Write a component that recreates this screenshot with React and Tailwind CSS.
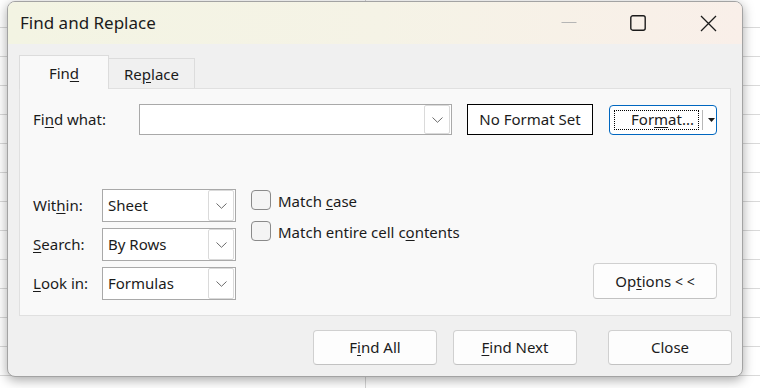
import React from 'react';

const font = { fontFamily: '"Noto Sans", "Open Sans", sans-serif' };

function Chevron() {
  return (
    <svg width="11" height="6" viewBox="0 0 11 6" fill="none">
      <path d="M0.5 0.5 L5.5 5.3 L10.5 0.5" stroke="#6b6b6b" strokeWidth="1" />
    </svg>
  );
}

function Select({ value }) {
  return (
    <div className="flex h-[33px] w-[134px] items-center border border-[#a9a9a9] bg-white pl-[5px] text-[15px] text-[#1b1b1b]">
      <span className="flex-1">{value}</span>
      <div className="mr-px flex h-[31px] w-[26px] items-center justify-center rounded-[2px] border border-[#dadada]">
        <Chevron />
      </div>
    </div>
  );
}

function Checkbox({ children }) {
  return (
    <div className="flex h-[20px] items-center gap-[7px]">
      <div className="h-[20px] w-[20px] rounded-[4px] border border-[#8a8a8a] bg-[#f4f4f4]" />
      <span className="pt-[3px] text-[15px] leading-none text-[#1b1b1b]">{children}</span>
    </div>
  );
}

function Button({ children, className = '' }) {
  return (
    <button
      className={
        'flex items-center justify-center rounded-[4px] border border-[#d0d0d0] border-b-[#c2c2c2] bg-[#fdfdfd] text-[15px] text-[#1b1b1b] ' +
        className
      }
    >
      {children}
    </button>
  );
}

export default function App() {
  return (
    <div
      className="h-[388px] w-[760px] overflow-hidden bg-white bg-[repeating-linear-gradient(to_bottom,transparent_0,transparent_27px,#d9d9d9_27px,#d9d9d9_28px,transparent_28px,transparent_29px),linear-gradient(to_right,transparent_365px,#d4d4d4_365px,#d4d4d4_366px,transparent_366px)] pt-px pl-[7px]"
      style={font}
    >
      <div className="flex h-[376px] w-[736px] flex-col overflow-hidden rounded-[8px] border border-[#a3a3a3] bg-[#f0f0f0] shadow-[0_3px_12px_rgba(0,0,0,0.35)]">
        {/* title bar */}
        <div className="flex h-[42px] items-center bg-gradient-to-r from-[#f3f4e3] via-[#f5f3e6] to-[#f9efe9] pl-[12px]">
          <span className="text-[17px] text-[#1b1b1b]">Find and Replace</span>
          <div className="ml-auto flex items-center">
            <svg width="16" height="16" viewBox="0 0 16 16" className="mr-[53px]">
              <path d="M0.5 7.5 H15.5" stroke="#b5b5b5" strokeWidth="1" />
            </svg>
            <svg width="16" height="16" viewBox="0 0 16 16" className="mr-[54px]">
              <rect x="0.8" y="0.8" width="14.4" height="14.4" rx="2" fill="none" stroke="#1b1b1b" strokeWidth="1.4" />
            </svg>
            <svg width="17" height="17" viewBox="0 0 17 17" className="mr-[25px]">
              <path d="M1 1 L16 16 M16 1 L1 16" stroke="#1b1b1b" strokeWidth="1.3" />
            </svg>
          </div>
        </div>

        {/* body */}
        <div className="flex flex-1 flex-col px-[11px] pt-[11px]">
          <div className="flex items-end">
            <div className="relative z-10 -mb-px flex h-[34px] w-[90px] items-center justify-center border border-b-0 border-[#dcdcdc] bg-[#f9f9f9] pt-[2px] text-[15px] text-[#1b1b1b]">
              <span>
                Fin<u className="underline-offset-2">d</u>
              </span>
            </div>
            <div className="flex h-[30px] w-[86px] items-center justify-center border border-b-0 border-l-0 border-[#dcdcdc] bg-[#f0f0f0] pt-[2px] text-[15px] text-[#1b1b1b]">
              <span>
                Re<u className="underline-offset-2">p</u>lace
              </span>
            </div>
          </div>

          <div className="flex h-[228px] flex-col border border-[#e0e0e0] bg-[#f9f9f9] pt-[15px] pr-[13px] pl-[13px]">
            {/* find what row */}
            <div className="flex items-center">
              <span className="w-[106px] text-[15px] text-[#1b1b1b]">
                Fi<u className="underline-offset-2">n</u>d what:
              </span>
              <div className="flex h-[31px] w-[313px] items-center justify-end border border-[#a9a9a9] bg-white">
                <div className="mr-px flex h-[29px] w-[26px] items-center justify-center rounded-[2px] border border-[#dadada]">
                  <Chevron />
                </div>
              </div>
              <div className="ml-[15px] flex h-[31px] w-[126px] items-center justify-center border border-black bg-white text-[15px] text-[#1b1b1b]">
                No Format Set
              </div>
              <div className="ml-[16px] flex h-[30px] w-[108px] items-center rounded-[4px] border-[1.5px] border-[#0067c0] bg-white">
                <div className="ml-[4px] flex h-[20px] w-[85px] items-center justify-end border border-dotted border-black pr-[4px] text-[15px] text-[#1b1b1b]">
                  <span>
                    For<u className="underline-offset-2">m</u>at...
                  </span>
                </div>
                <div className="ml-[3px] h-[20px] w-px bg-[#b8b8b8]" />
                <svg width="7" height="4" viewBox="0 0 7 4" className="ml-[5px]">
                  <path d="M0 0 H7 L3.5 4 Z" fill="#1b1b1b" />
                </svg>
              </div>
            </div>

            {/* options section */}
            <div className="mt-[54px] flex">
              <div className="flex flex-col gap-[6px]">
                <div className="flex items-center">
                  <span className="w-[69px] text-[15px] text-[#1b1b1b]">
                    Wit<u className="underline-offset-2">h</u>in:
                  </span>
                  <Select value="Sheet" />
                </div>
                <div className="flex items-center">
                  <span className="w-[69px] text-[15px] text-[#1b1b1b]">
                    <u className="underline-offset-2">S</u>earch:
                  </span>
                  <Select value="By Rows" />
                </div>
                <div className="flex items-center">
                  <span className="w-[69px] text-[15px] text-[#1b1b1b]">
                    <u className="underline-offset-2">L</u>ook in:
                  </span>
                  <Select value="Formulas" />
                </div>
              </div>

              <div className="ml-[15px] flex flex-col gap-[11px] self-start pt-px">
                <Checkbox>
                  Match <u className="underline-offset-2">c</u>ase
                </Checkbox>
                <Checkbox>
                  Match entire cell c<u className="underline-offset-2">o</u>ntents
                </Checkbox>
              </div>

              <Button className="mb-px ml-auto h-[36px] w-[124px] self-end">
                <span>
                  Op<u className="underline-offset-2">t</u>ions <span className="text-[14px]">&lt; &lt;</span>
                </span>
              </Button>
            </div>
          </div>

          {/* bottom buttons */}
          <div className="mt-[14px] flex justify-end">
            <Button className="h-[35px] w-[124px]">
              <span>
                F<u className="underline-offset-2">i</u>nd All
              </span>
            </Button>
            <Button className="ml-[16px] h-[35px] w-[124px]">
              <span>
                <u className="underline-offset-2">F</u>ind Next
              </span>
            </Button>
            <Button className="mr-[-1px] ml-[31px] h-[35px] w-[124px]">Close</Button>
          </div>
        </div>
      </div>
    </div>
  );
}
